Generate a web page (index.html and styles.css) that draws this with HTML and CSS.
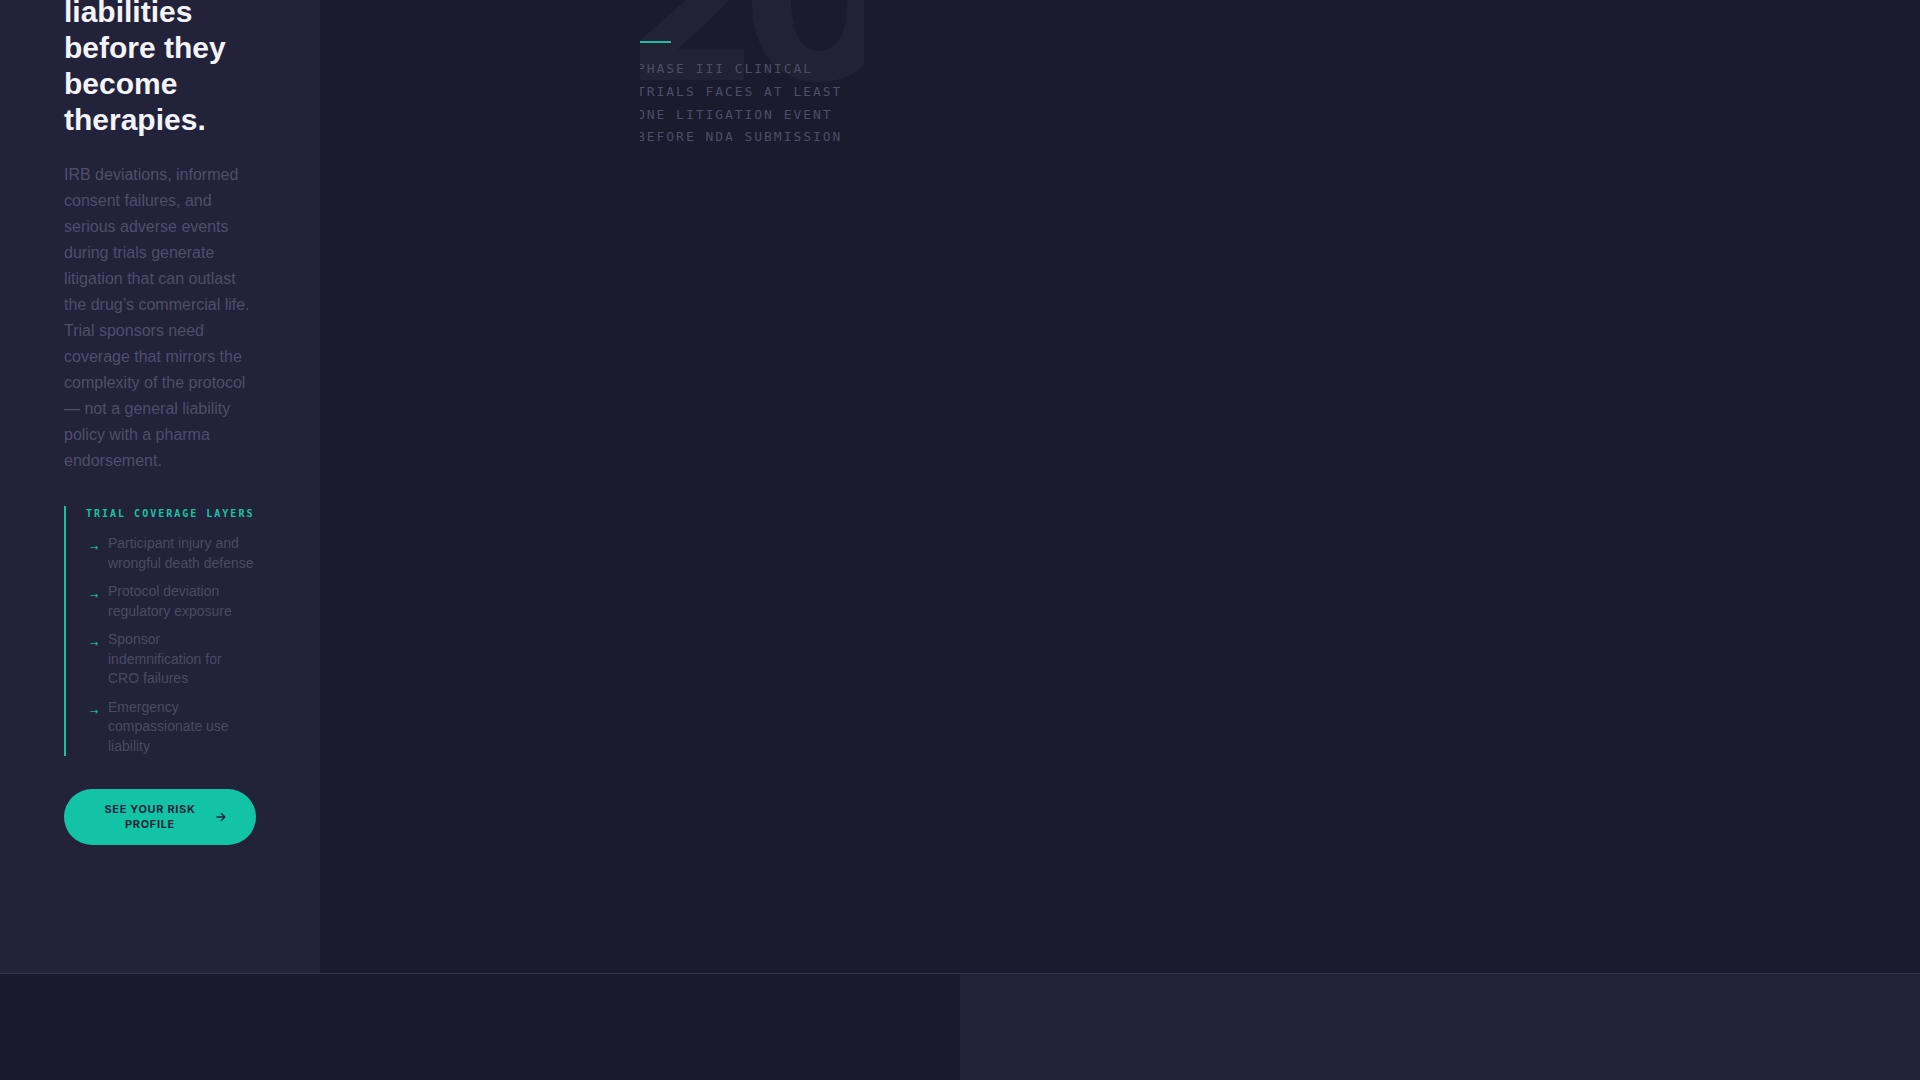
FILE: index.html
```html
<!DOCTYPE html>
<html lang="en">
<head>
<meta charset="utf-8">
<title>Trial coverage</title>
<link rel="stylesheet" href="styles.css">
</head>
<body>
<main class="page">
  <section class="feature">
    <aside class="panel">
      <h2 class="panel-title">liabilities before they become therapies.</h2>
      <p class="panel-copy">IRB deviations, informed consent failures, and serious adverse events during trials generate litigation that can outlast the drug’s commercial life. Trial sponsors need coverage that mirrors the complexity of the protocol — not a general liability policy with a pharma endorsement.</p>
      <div class="layers">
        <div class="layers-title">TRIAL COVERAGE LAYERS</div>
        <ul class="layers-list">
          <li><span class="layers-arrow">→</span><span class="layers-text">Participant injury and wrongful death defense</span></li>
          <li><span class="layers-arrow">→</span><span class="layers-text">Protocol deviation regulatory exposure</span></li>
          <li><span class="layers-arrow">→</span><span class="layers-text">Sponsor indemnification for CRO failures</span></li>
          <li><span class="layers-arrow">→</span><span class="layers-text">Emergency compassionate use liability</span></li>
        </ul>
      </div>
      <a class="cta" href="#">
        <span class="cta-label">SEE YOUR RISK PROFILE</span>
        <svg class="cta-icon" width="10" height="10" viewBox="0 0 10 10" aria-hidden="true"><path d="M1 5H8.6M5.4 1.6L8.8 5L5.4 8.4" fill="none" stroke="#17263a" stroke-width="1.4" stroke-linecap="round" stroke-linejoin="round"/></svg>
      </a>
    </aside>
    <div class="stage">
      <div class="stat">
        <div class="stat-number">20</div>
        <div class="stat-bar"></div>
        <p class="stat-text">Phase III clinical trials faces at least one litigation event before NDA submission</p>
      </div>
    </div>
  </section>
  <section class="lower">
    <div class="lower-a"></div>
    <div class="lower-b"></div>
  </section>
</main>
</body>
</html>
```

FILE: styles.css
```css
* { box-sizing: border-box; }
html, body { margin: 0; padding: 0; }
body {
  background: #1a1a2e;
  width: 1920px;
  height: 1080px;
  overflow: hidden;
  font-family: "Liberation Sans", Arial, sans-serif;
}
.page { display: flex; flex-direction: column; height: 1080px; }

.feature {
  display: grid;
  grid-template-columns: 320px 1fr;
  height: 974px;
  border-bottom: 1px solid #30314a;
  background: #1a1b2e;
}

.panel {
  background: #22223a;
  padding: 0 64px;
  display: flex;
  flex-direction: column;
  align-items: flex-start;
}
.panel-title {
  margin: -6px 0 0;
  font-size: 30px;
  line-height: 36px;
  font-weight: 700;
  color: #f3f3f8;
}
.panel-copy {
  margin: 24px 0 0;
  font-size: 16px;
  line-height: 26px;
  color: #4e4f6a;
}

.layers {
  margin-top: 32px;
  width: 192px;
  border-left: 2px solid #16c2a3;
  padding: 0 1px 0 20px;
}
.layers-title {
  font-family: "DejaVu Sans Mono", "Liberation Mono", monospace;
  font-size: 10px;
  font-weight: 700;
  letter-spacing: 0.2em;
  line-height: 15px;
  color: #19c3a4;
  white-space: nowrap;
}
.layers-list {
  list-style: none;
  margin: 13px 0 0;
  padding: 0;
  display: flex;
  flex-direction: column;
  gap: 8.8px;
}
.layers-list li {
  display: flex;
  align-items: flex-start;
}
.layers-arrow {
  flex: 0 0 22px;
  padding: 4px 0 0 4px;
  font-family: "DejaVu Sans", sans-serif;
  font-size: 10px;
  line-height: 19.6px;
  color: #17b99c;
}
.layers-text {
  flex: 1;
  font-size: 14px;
  line-height: 19.6px;
  color: #4a4b63;
}

.cta {
  margin-top: 33px;
  width: 192px;
  height: 56px;
  border-radius: 28px;
  background: #12c3a6;
  display: flex;
  align-items: center;
  gap: 14px;
  padding: 0 30px 0 34px;
  text-decoration: none;
}
.cta-label {
  flex: 1;
  text-align: center;
  font-family: Inter, "Liberation Sans", sans-serif;
  font-size: 11px;
  font-weight: 700;
  letter-spacing: 0.06em;
  line-height: 15.5px;
  color: #17263a;
}
.cta-icon { flex: 0 0 10px; }

.stage {
  padding: 0 0 0 320px;
}
.stat {
  position: relative;
  width: 224px;
  overflow: hidden;
  padding-top: 41px;
}
.stat-number {
  position: absolute;
  left: -26px;
  top: -110px;
  font-family: Inter, "Liberation Sans", sans-serif;
  font-size: 220px;
  font-weight: 800;
  line-height: 1;
  letter-spacing: -0.05em;
  color: rgba(255, 255, 255, 0.03);
  white-space: nowrap;
}
.stat-bar {
  position: relative;
  width: 31px;
  height: 2px;
  background: #1bbfa2;
}
.stat-text {
  position: relative;
  margin: 15px 0 0 -3px;
  width: 227px;
  font-family: "DejaVu Sans Mono", "Liberation Mono", monospace;
  font-size: 13px;
  line-height: 22.75px;
  letter-spacing: 0.15em;
  text-transform: uppercase;
  color: #4d4e67;
}

.lower {
  flex: 1;
  display: grid;
  grid-template-columns: 1fr 1fr;
}
.lower-a { background: #1a1a2e; }
.lower-b { background: #222239; }
```
